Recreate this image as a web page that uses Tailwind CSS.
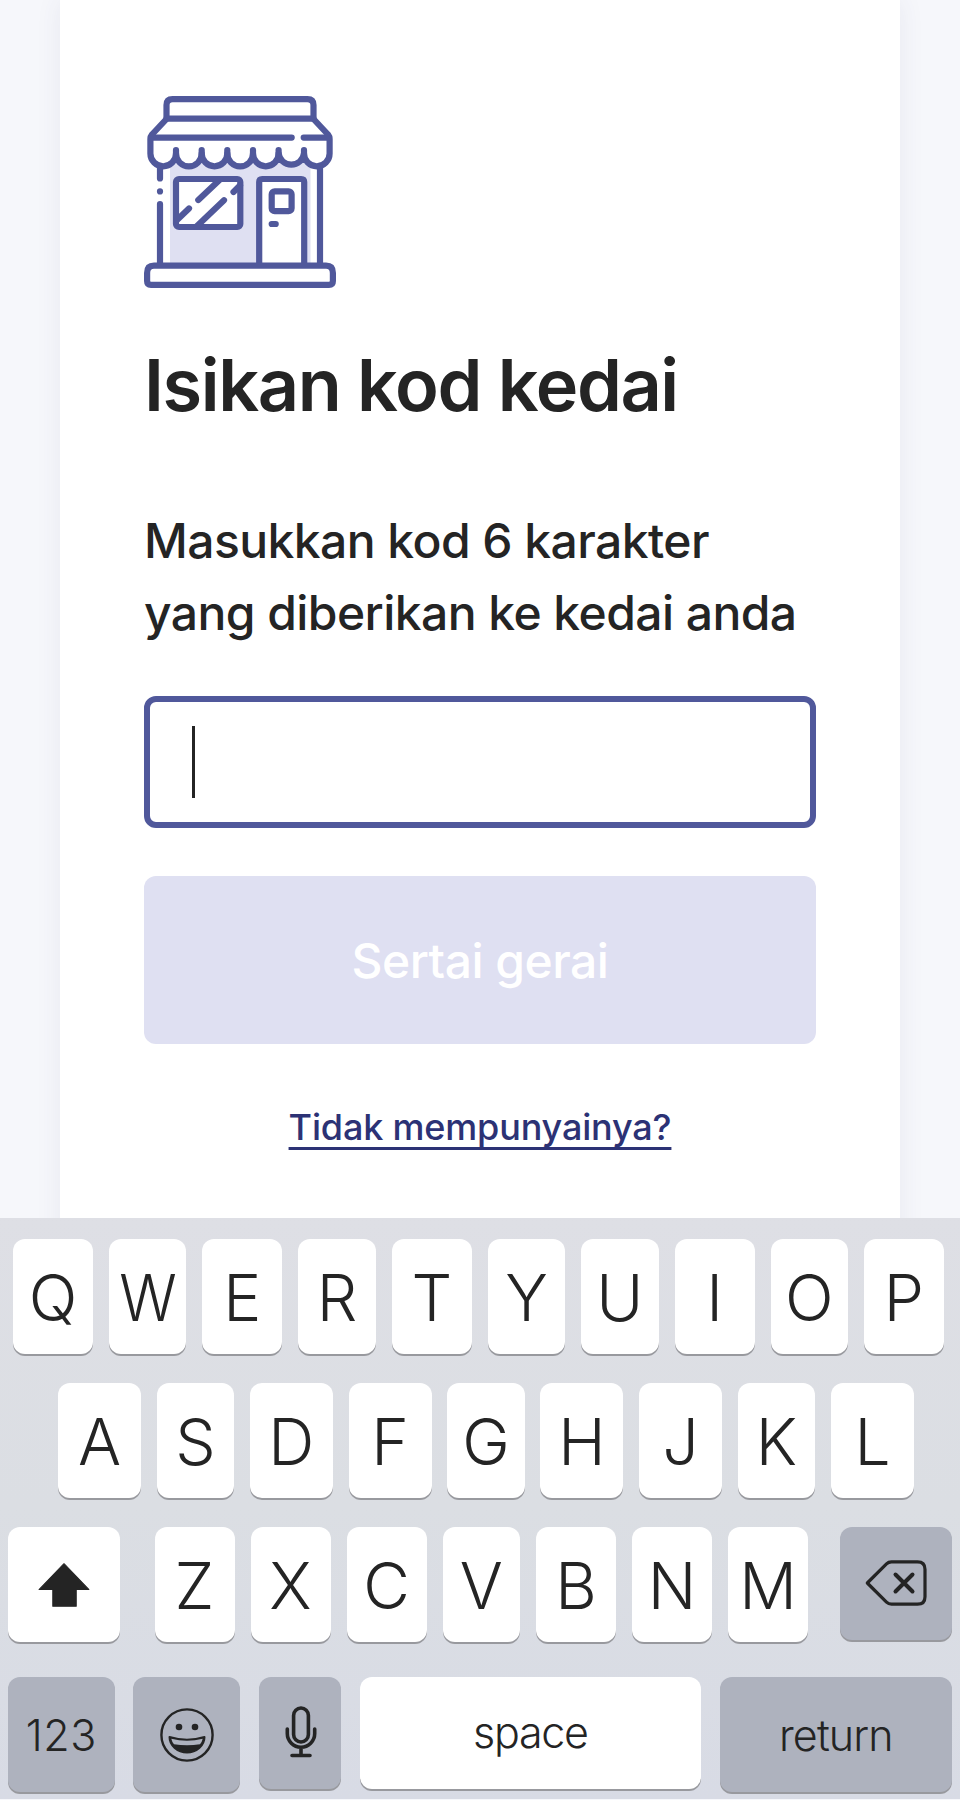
<!DOCTYPE html>
<html lang="ms">
<head>
<meta charset="utf-8">
<title>Isikan kod kedai</title>
<script src="https://cdn.jsdelivr.net/npm/@tailwindcss/browser@4"></script>
</head>
<body class="w-[960px] h-[1800px] overflow-hidden bg-[#f6f7fb] font-['Inter',sans-serif] text-[#242424]">
<div class="flex flex-col h-[1800px]">
  <main class="h-[1218px] shrink-0 overflow-hidden px-[60px]">
    <section class="flex flex-col h-[1400px] bg-white px-[84px] pt-24 shadow-[0_0_24px_rgba(60,60,120,0.08)]">
      <svg class="size-48 shrink-0" viewBox="0 0 192 192" fill="none" stroke="#50589b" stroke-width="6.2" stroke-linecap="round" stroke-linejoin="round">
        <path d="M26 66H166.500V168H26Z" fill="#dfe0f2" stroke="none"/>
        <path d="M22.500 23V9Q22.500 3.100 28.500 3.100H163.500Q169.500 3.100 169.500 9V23L184 38.500Q185.600 40.500 185.600 43V57.500A12.800 12.800 0 0 1 160 57.500A12.800 12.800 0 0 1 134.600 57.500A12.800 12.800 0 0 1 109 57.500A12.800 12.800 0 0 1 83.300 57.500A12.800 12.800 0 0 1 57.700 57.500A12.800 12.800 0 0 1 32 57.500A12.800 12.800 0 0 1 6.400 57.500V43Q6.400 40.500 8 38.500Z" fill="white"/>
        <path d="M22.500 22.700H169.500M7 41.600H147.700M159.700 41.600H185M32 54V58M57.700 54V58M83.300 54V58M109 54V58M134.600 54V58M160 54V58"/>
        <path d="M16 71V82.500M16 95.300V95.400M16 108V168M176 71V168"/>
        <rect x="32" y="83" width="64.300" height="48" rx="3" fill="white"/>
        <path d="M45 112.500L33.500 123.500M54.300 104L76 83.500M80 104.200L52.500 130.500M89.500 96L96 89.500"/>
        <path d="M115.200 168V86Q115.200 83 118.200 83H157.200Q160.200 83 160.200 86V168" fill="white"/>
        <rect x="127.700" y="95.300" width="19.900" height="19.900" rx="3"/>
        <path d="M127.700 128H131.700"/>
        <path d="M3.100 177Q3.100 169.700 10 169.700H182Q188.900 169.700 188.900 177V185Q188.900 188.900 185 188.900H7Q3.100 188.900 3.100 185Z" fill="white"/>
      </svg>
      <h1 class="mt-[49px] text-[72px] leading-24 font-semibold tracking-[-1.400px] whitespace-nowrap">Isikan kod kedai</h1>
      <p class="mt-[72px] text-[48px] leading-18 font-medium tracking-[-0.560px] whitespace-nowrap">Masukkan kod 6 karakter<br>yang diberikan ke kedai anda</p>
      <div class="mt-[47px] flex h-[132px] shrink-0 items-center rounded-xl border-6 border-[#50589b] pl-[42px]">
        <span class="h-18 w-[3px] bg-[#242424]"></span>
      </div>
      <button class="mt-12 h-[168px] shrink-0 rounded-xl bg-[#dfe0f2] pt-0.5 text-[48px] font-medium tracking-[-0.500px] text-white">Sertai gerai</button>
      <a class="mt-[59px] self-center text-[36px] leading-12 font-medium tracking-[-0.170px] text-[#2c3275] underline decoration-[3px] underline-offset-[7px] [text-decoration-skip-ink:none]">Tidak mempunyainya?</a>
    </section>
  </main>

  <div class="h-[581px] shrink-0 bg-linear-to-b from-[#dedfe5] via-[#dbdee3] to-[#d8dbe5] pt-[21px] text-[64px] font-light [&_span]:rounded-xl [&_span]:flex [&_span]:shrink-0 [&_span]:items-center [&_span]:justify-center [&_span]:shadow-[0_2px_0_#98999e]">
    <div class="flex h-[115px] justify-between pl-[13px] pr-4 [&_span]:bg-white [&_span]:pt-[2px]">
      <span class="w-20">Q</span><span class="w-[77.500px]"><b class="scale-x-93 font-light">W</b></span><span class="w-20">E</span><span class="w-[77.500px]">R</span><span class="w-20">T</span><span class="w-[77.500px]">Y</span><span class="w-[77.500px]">U</span><span class="w-20">I</span><span class="w-[77.500px]">O</span><span class="w-20">P</span>
    </div>
    <div class="mt-[29px] flex h-[115px] justify-between pl-[58px] pr-[46px] [&_span]:bg-white [&_span]:pt-[2px]">
      <span class="w-[83px]">A</span><span class="w-[77.500px]">S</span><span class="w-[83px]">D</span><span class="w-[83px]">F</span><span class="w-[77.500px]">G</span><span class="w-[83px]">H</span><span class="w-[83px]">J</span><span class="w-[77.500px]">K</span><span class="w-[83px]">L</span>
    </div>
    <div class="mt-[29px] flex h-[115px] items-start pl-2">
      <span class="h-[115px] w-28 bg-white">
        <svg class="h-11 w-[52px]" viewBox="0 0 51 44" preserveAspectRatio="none" fill="#242424" stroke="#242424" stroke-linejoin="round"><path d="M25.500 .7L50 26.500H37.500V43.300H14.500V26.500H1Z"/></svg>
      </span>
      <div class="ml-[34.500px] flex h-[115px] gap-4 [&_span]:bg-white [&_span]:pt-[2px]">
        <span class="w-20">Z</span><span class="w-20">X</span><span class="w-20">C</span><span class="w-[77.500px]">V</span><span class="w-20">B</span><span class="w-20">N</span><span class="w-20">M</span>
      </div>
      <span class="ml-8 h-[112.500px] w-28 bg-[#aeb2be]">
        <svg class="h-[46px] w-[62px]" viewBox="0 0 62 46" fill="none" stroke="#242424" stroke-width="3.200" stroke-linejoin="round" stroke-linecap="round"><path d="M2.300 23L21.500 3.800Q23.500 1.800 26.500 1.800H52.500Q60 1.800 60 9.300V36.700Q60 44.200 52.500 44.200H26.500Q23.500 44.200 21.500 42.200Z"/><path d="M30.500 14.500L47.500 31.500M47.500 14.500L30.500 31.500" stroke-width="4"/></svg>
      </span>
    </div>
    <div class="mt-[34.500px] flex h-[115px] items-start gap-[18.800px] pl-2 text-[43px]">
      <span class="h-[115px] w-[106.600px] bg-[#aeb2be] pt-0.5 tracking-[0.600px]">123</span>
      <span class="h-[115px] w-[106.600px] bg-[#aeb2be] pt-0.5">
        <svg class="size-[54px]" viewBox="0 0 54 54"><circle cx="27" cy="27" r="25.600" fill="none" stroke="#242424" stroke-width="2.400"/><circle cx="19" cy="19" r="3.300" fill="#242424"/><circle cx="35" cy="19" r="3.300" fill="#242424"/><path d="M9.500 29Q27 34.500 44.500 29C44.500 37.500 36.500 44.500 27 44.500S9.500 37.500 9.500 29Z" fill="#242424" stroke="#242424" stroke-width="2" stroke-linejoin="round"/><path d="M11.300 30.700Q27 34.800 42.700 30.700Q42 34 40 36.200Q27 38.500 14 36.200Q12 34 11.300 30.700Z" fill="#aeb2be"/></svg>
      </span>
      <span class="h-[112.500px] w-[82px] bg-[#aeb2be] pb-0.5">
        <svg class="ml-0.5 h-[52px] w-8" viewBox="0 0 32 52" fill="none" stroke="#242424" stroke-width="3.600" stroke-linecap="round"><rect x="8.600" y="2" width="14.800" height="34" rx="7.400"/><path d="M2.300 23V27.500A13.700 13.700 0 0 0 29.700 27.500V23M16 41.500V49M7 49.500H25"/></svg>
      </span>
      <span class="h-[112.500px] w-[341.500px] bg-white pb-0.5 tracking-[-1.300px]">space</span>
      <span class="h-[115px] w-[232px] bg-[#aeb2be] pt-0.5 tracking-[-0.880px]">return</span>
    </div>
  </div>
</div>
</body>
</html>
